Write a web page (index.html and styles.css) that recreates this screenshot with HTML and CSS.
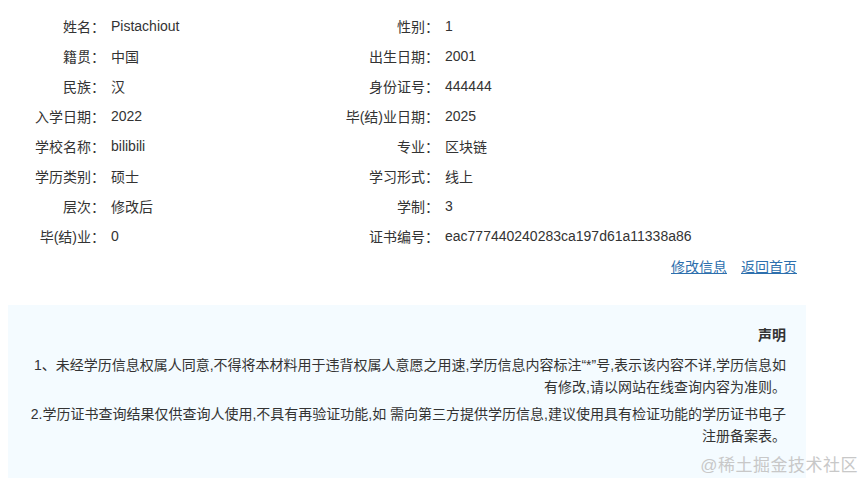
FILE: index.html
```html
<!DOCTYPE html>
<html lang="zh-CN">
<head>
<meta charset="utf-8">
<title>学历信息</title>
<link rel="stylesheet" href="styles.css">
</head>
<body>
<div class="info">
  <div class="label">姓名：</div><div class="value">Pistachiout</div>
  <div class="label">性别：</div><div class="value">1</div>
  <div class="label">籍贯：</div><div class="value">中国</div>
  <div class="label">出生日期：</div><div class="value">2001</div>
  <div class="label">民族：</div><div class="value">汉</div>
  <div class="label">身份证号：</div><div class="value">444444</div>
  <div class="label">入学日期：</div><div class="value">2022</div>
  <div class="label">毕(结)业日期：</div><div class="value">2025</div>
  <div class="label">学校名称：</div><div class="value">bilibili</div>
  <div class="label">专业：</div><div class="value">区块链</div>
  <div class="label">学历类别：</div><div class="value">硕士</div>
  <div class="label">学习形式：</div><div class="value">线上</div>
  <div class="label">层次：</div><div class="value">修改后</div>
  <div class="label">学制：</div><div class="value">3</div>
  <div class="label">毕(结)业：</div><div class="value">0</div>
  <div class="label">证书编号：</div><div class="value">eac777440240283ca197d61a11338a86</div>
</div>
<div class="actions">
  <a href="#" class="link">修改信息</a>
  <a href="#" class="link">返回首页</a>
</div>
<div class="notice">
  <div class="notice-title">声明</div>
  <p class="notice-text">1、未经学历信息权属人同意,不得将本材料用于违背权属人意愿之用速,学历信息内容标注“*”号,表示该内容不详,学历信息如有修改,请以网站在线查询内容为准则。</p>
  <p class="notice-text">2.学历证书查询结果仅供查询人使用,不具有再验证功能,如 需向第三方提供学历信息,建议使用具有检证功能的学历证书电子注册备案表。</p>
</div>
<div class="watermark">@稀土掘金技术社区</div>
</body>
</html>
```

FILE: styles.css
```css
html, body {
  margin: 0;
  padding: 0;
  background: #ffffff;
}
body {
  padding: 11px 8px 0 8px;
  font-family: "Liberation Sans", Arial, "Noto Sans CJK SC", sans-serif;
  font-size: 14px;
  color: #333333;
  position: relative;
  height: 473px;
}
.info {
  display: grid;
  grid-template-columns: 97px 230px 104px 1fr;
  grid-auto-rows: 30px;
  align-items: center;
}
.label {
  text-align: right;
  white-space: nowrap;
}
.value {
  padding-left: 6px;
  white-space: nowrap;
}
.actions {
  display: flex;
  justify-content: flex-end;
  gap: 14px;
  height: 30px;
  align-items: center;
  padding-right: 61px;
}
.link {
  color: #2d6fad;
  text-decoration: underline;
}
.notice {
  margin-top: 24px;
  width: 758px;
  background: #f4fbff;
  padding: 19px 20px 26px 20px;
  text-align: right;
}
.notice-title {
  font-weight: bold;
  line-height: 22px;
  margin-bottom: 8px;
}
.notice-text {
  margin: 0 0 5px 0;
  line-height: 22px;
}
.watermark {
  position: absolute;
  right: 8px;
  bottom: 8px;
  font-size: 17px;
  color: #c8c8c8;
  letter-spacing: 0.5px;
}
```
